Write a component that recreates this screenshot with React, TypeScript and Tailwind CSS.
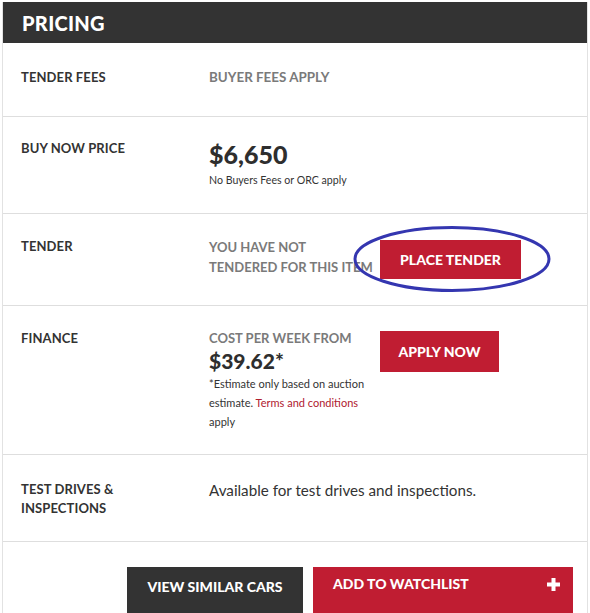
import React from "react";

const font = { fontFamily: "Lato, 'Open Sans', sans-serif" };

function Label({ children }: { children: React.ReactNode }) {
  return <div className="text-[13px] leading-[19px] font-bold text-[#333] uppercase tracking-[0.1px]">{children}</div>;
}

export default function App() {
  return (
    <div className="bg-white w-[590px] pt-[2px] pl-[2px]" style={font}>
      <div className="w-[586px] border-r border-l border-[#e2e2e2]">
        <div className="h-[41px] bg-[#333333] flex items-center px-[19px]">
          <span className="text-white text-[20px] font-black tracking-[0.3px]">PRICING</span>
        </div>

        {/* Tender fees */}
        <div className="h-[74px] border-b border-[#dedede] grid grid-cols-[188px_1fr] px-[18px] pt-[25px]">
          <Label>Tender Fees</Label>
          <div className="text-[13.4px] leading-[19px] font-bold text-[#7a7a7a]">BUYER FEES APPLY</div>
        </div>

        {/* Buy now */}
        <div className="h-[97px] border-b border-[#dedede] grid grid-cols-[188px_1fr] px-[18px] pt-[22px]">
          <Label>Buy Now Price</Label>
          <div>
            <div className="text-[25px] leading-[30px] font-black text-[#2e2e2e]">$6,650</div>
            <div className="text-[10.6px] leading-[16px] text-[#333] mt-[3px]">No Buyers Fees or ORC apply</div>
          </div>
        </div>

        {/* Tender */}
        <div className="relative h-[92px] border-b border-[#dedede] grid grid-cols-[188px_171px_1fr] px-[18px] pt-[23px]">
          <Label>Tender</Label>
          <div className="text-[13px] leading-[20px] font-bold text-[#7a7a7a]">
            YOU HAVE NOT
            <br />
            TENDERED FOR THIS ITEM
          </div>
          <div className="relative z-10">
            <button className="h-[39px] w-[141px] bg-[#c01d32] text-white text-[14px] font-black flex items-center justify-center pb-[1px] mt-[3px]">
              PLACE TENDER
            </button>
          </div>
          <svg className="absolute left-[349px] top-[11px] z-20 pointer-events-none" width="200" height="68" viewBox="0 0 200 68">
            <ellipse cx="100" cy="34" rx="97" ry="31.5" fill="none" stroke="#3436b0" strokeWidth="3" />
          </svg>
        </div>

        {/* Finance */}
        <div className="h-[149px] border-b border-[#dedede] grid grid-cols-[188px_171px_1fr] px-[18px] pt-[23px]">
          <Label>Finance</Label>
          <div>
            <div className="text-[13px] leading-[19px] font-bold text-[#7a7a7a]">COST PER WEEK FROM</div>
            <div className="text-[21px] leading-[24px] font-black text-[#2e2e2e] mt-[1px]">$39.62*</div>
            <p className="text-[11px] leading-[19px] text-[#333] mt-[1px] w-[160px]">
              *Estimate only based on auction
              <br />
              estimate.&nbsp;<span className="text-[#b0202f]">Terms and conditions</span>
              <br />
              apply
            </p>
          </div>
          <div>
            <button className="h-[41px] w-[119px] bg-[#c01d32] text-white text-[14px] font-black flex items-center justify-center mt-[2px]">
              APPLY NOW
            </button>
          </div>
        </div>

        {/* Test drives */}
        <div className="h-[87px] border-b border-[#dedede] grid grid-cols-[188px_1fr] px-[18px] pt-[25px]">
          <Label>
            Test Drives &amp;
            <br />
            Inspections
          </Label>
          <div className="text-[15.2px] leading-[20px] text-[#333]">Available for test drives and inspections.</div>
        </div>

        {/* Actions */}
        <div className="h-[80px] flex justify-end gap-[10px] pr-[14px] pt-[25px]">
          <button className="h-[50px] w-[176px] bg-[#333333] text-white text-[14px] font-black flex items-start justify-center pt-[9px]">
            VIEW SIMILAR CARS
          </button>
          <button className="h-[50px] w-[260px] bg-[#c01d32] text-white text-[14px] font-black flex items-start justify-between pl-[20px] pr-[13px] pt-[6px]">
            <span>ADD TO WATCHLIST</span>
            <svg width="13" height="13" viewBox="0 0 13 13" className="mt-[5px]">
              <rect x="4.5" y="0" width="4" height="13" fill="white" />
              <rect x="0" y="4.5" width="13" height="4" fill="white" />
            </svg>
          </button>
        </div>
      </div>
    </div>
  );
}
